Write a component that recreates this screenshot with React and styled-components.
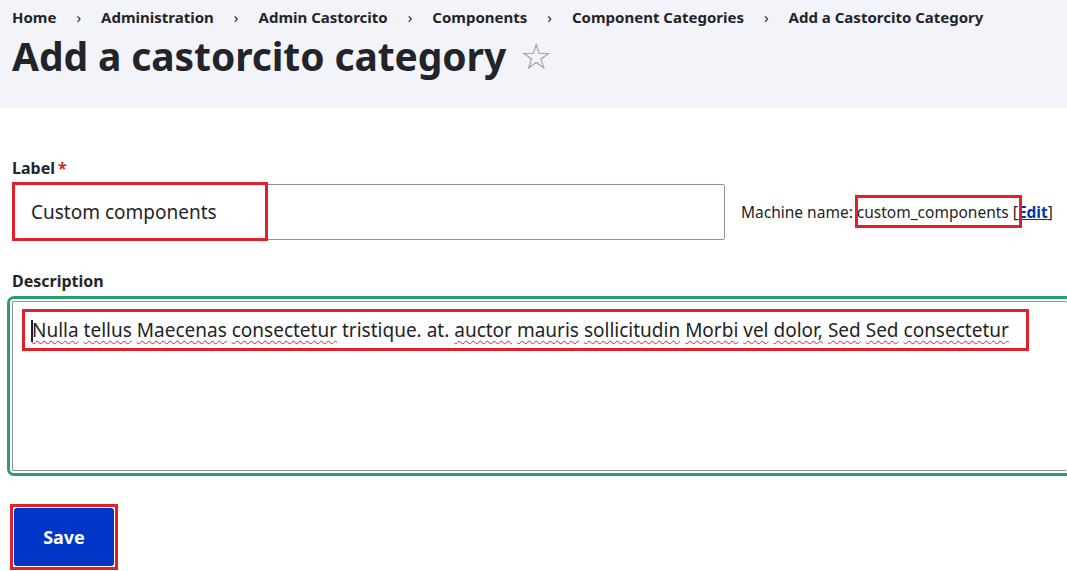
import React from "react";
import styled, { createGlobalStyle } from "styled-components";

const G = createGlobalStyle`
  body { margin:0; background:#fff; font-family:"Noto Sans","Open Sans",sans-serif; color:#232429; overflow:hidden; }
`;
const Header = styled.header`background:#f3f4f9;height:108px;padding:0 12px;box-sizing:border-box;`;
const Crumbs = styled.nav`display:flex;align-items:center;height:34px;font-size:15px;font-weight:700;`;
const Sep = styled.span`font-weight:400;margin:0 20px 0 20px;font-size:15px;`;
const Title = styled.h1`margin:0;font-size:39px;font-weight:700;line-height:44px;display:flex;align-items:center;letter-spacing:-0.1px;`;
const Star = styled.span`color:#9a9aa0;font-weight:400;font-size:36px;margin-left:14px;`;
const Main = styled.main`padding:50px 0 0 12px;position:relative;`;
const Label = styled.div`font-size:16px;font-weight:700;line-height:20px;margin-bottom:6px;`;
const Req = styled.span`color:#d72222;margin-left:3px;`;
const Row = styled.div`display:flex;align-items:center;`;
const Rel = styled.div`position:relative;`;
const Input = styled.div`width:713px;height:56px;box-sizing:border-box;border:1px solid #8e929c;border-radius:2px;font-size:19px;padding:0 18px;display:flex;align-items:center;`;
const Hi = styled.div`position:absolute;border:3px solid #e0202a;box-sizing:border-box;pointer-events:none;`;
const Machine = styled.div`font-size:15.5px;line-height:24px;margin-left:16px;position:relative;white-space:nowrap;`;
const Edit = styled.a`color:#0036b1;font-weight:700;text-decoration:underline;`;
const Area = styled.div`margin:31px 0 0;`;
const Green = styled.div`margin-left:-5px;margin-top:0;border:3px solid #26a269;border-radius:7px;border-right:none;border-top-right-radius:0;border-bottom-right-radius:0;padding:2px 0 2px 2px;`;
const TA = styled.div`height:170px;border:1px solid #8e929c;border-right:none;border-radius:2px;box-sizing:border-box;padding:15px 18px;font-size:19px;line-height:26px;position:relative;white-space:nowrap;`;
const Sq = styled.span`text-decoration:underline wavy #e0202a;text-decoration-thickness:1px;text-underline-offset:3px;`;
const Caret = styled.span`display:inline-block;width:2px;height:22px;background:#222;vertical-align:-5px;margin-right:-1px;`;
const BtnWrap = styled.div`margin-top:28px;margin-left:-2px;display:inline-block;border:3px solid #e0202a;padding:1px;`;
const Btn = styled.button`width:100px;height:58px;background:#0036c8;color:#fff;border:none;border-radius:3px;font:700 18px "Noto Sans",sans-serif;display:block;`;

const words = "Nulla tellus Maecenas consectetur tristique. at. auctor mauris sollicitudin Morbi vel dolor, Sed Sed consectetur".split(" ");

export default function App(){
  const crumbs=["Home","Administration","Admin Castorcito","Components","Component Categories","Add a Castorcito Category"];
  return <>
    <G/>
    <Header>
      <Crumbs>{crumbs.map((c,i)=><React.Fragment key={c}>{i>0&&<Sep>›</Sep>}<span>{c}</span></React.Fragment>)}</Crumbs>
      <Title>Add a castorcito category<Star>☆</Star></Title>
    </Header>
    <Main>
      <Label>Label<Req>*</Req></Label>
      <Row>
        <Rel>
          <Input>Custom components</Input>
          <Hi style={{left:0,top:-2,width:256,height:59}}/>
        </Rel>
        <Machine>Machine name: custom_components [<Edit>Edit</Edit>]
          <Hi style={{left:114,top:-5,width:167,height:33}}/>
        </Machine>
      </Row>
      <Area>
        <Label style={{marginBottom:5}}>Description</Label>
        <Green>
          <TA>
            <Caret/>{words.map((w,i)=><React.Fragment key={i}>{i>0?" ":""}{i!==4&&i!==5?<Sq>{w}</Sq>:w}</React.Fragment>)}
            <Hi style={{left:9,top:7,width:1007,height:42}}/>
          </TA>
        </Green>
      </Area>
      <BtnWrap><Btn>Save</Btn></BtnWrap>
    </Main>
  </>;
}
